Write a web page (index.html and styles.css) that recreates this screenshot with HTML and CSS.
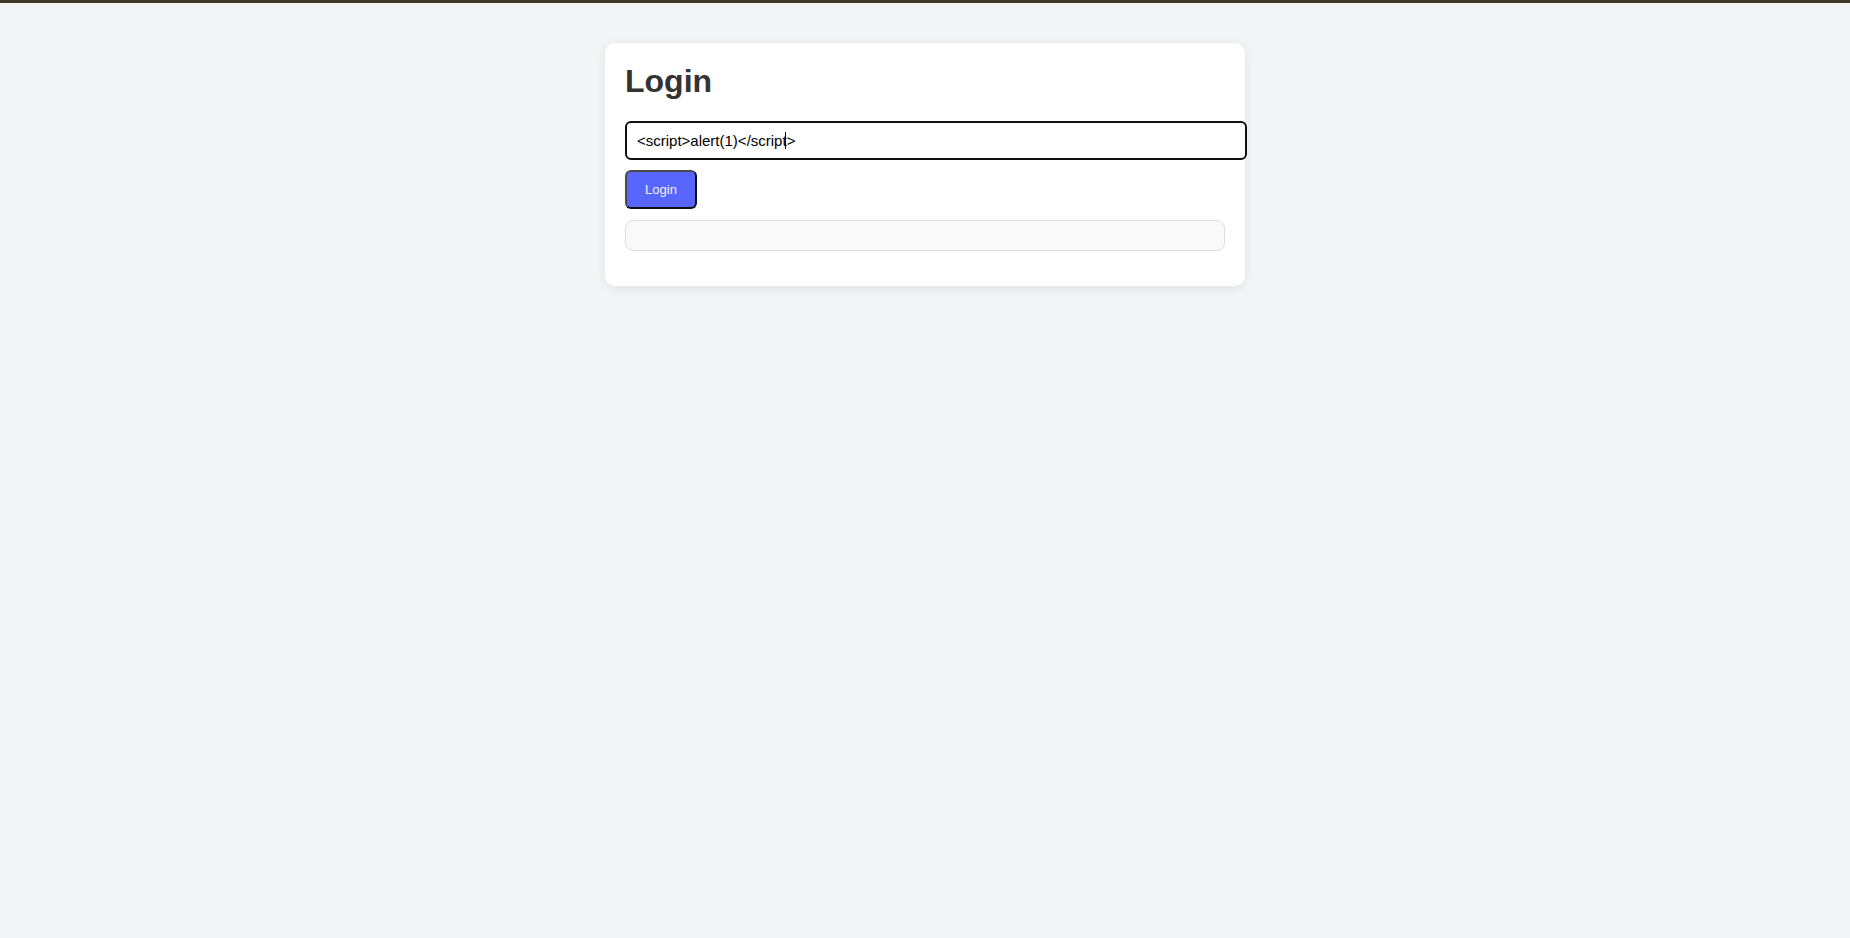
FILE: index.html
```html
<!DOCTYPE html>
<html lang="en">
<head>
<meta charset="utf-8">
<title>Login</title>
<link rel="stylesheet" href="styles.css">
</head>
<body>
<div class="topbar"></div>
<main class="page">
  <section class="card">
    <h1 class="title">Login</h1>
    <div class="field-wrap">
      <input class="field" id="username" type="text" value="<script>alert(1)</script>">
      <span class="caret"></span>
    </div>
    <div class="actions">
      <button class="btn" type="button">Login</button>
    </div>
    <div class="output"></div>
  </section>
</main>
</body>
</html>
```

FILE: styles.css
```css
* { box-sizing: border-box; }
html, body {
  margin: 0;
  padding: 0;
}
body {
  background: #f3f4f6;
  font-family: "Liberation Sans", Arial, sans-serif;
  min-height: 938px;
}
.topbar {
  height: 3px;
  background: #3d3a26;
}
.page {
  display: flex;
  justify-content: center;
  padding-top: 40px;
}
.card {
  width: 640px;
  background: #ffffff;
  border-radius: 10px;
  box-shadow: 0 2px 12px rgba(0, 0, 0, 0.08);
  padding: 20px 20px 35px 20px;
}
.title {
  margin: 0 0 21px 0;
  font-size: 32px;
  font-weight: 700;
  color: #333333;
  line-height: normal;
}
.field-wrap {
  position: relative;
}
.field {
  display: block;
  width: calc(100% + 22px);
  height: 39px;
  margin: 0;
  padding: 0 10px;
  border: 2px solid #101010;
  border-radius: 6px;
  background: #ffffff;
  font-family: "Liberation Sans", Arial, sans-serif;
  font-size: 15px;
  color: #000000;
  outline: none;
}
.caret {
  position: absolute;
  left: 160px;
  top: 11px;
  width: 1px;
  height: 17px;
  background: #000000;
}
.actions {
  display: flex;
  margin-top: 10px;
}
.btn {
  width: 68px;
  height: 35px;
  padding: 0;
  border-radius: 6px;
  background: #5865fb;
  color: #f2f2ff;
  font-family: "Liberation Sans", Arial, sans-serif;
  font-size: 13px;
  border-style: solid;
  border-width: 2px;
  border-color: #4a4a4a #111111 #111111 #4a4a4a;
  box-sizing: content-box;
}
.output {
  margin-top: 11px;
  height: 31px;
  background: #f9f9f9;
  border: 1px solid #dddddd;
  border-radius: 8px;
}
```
